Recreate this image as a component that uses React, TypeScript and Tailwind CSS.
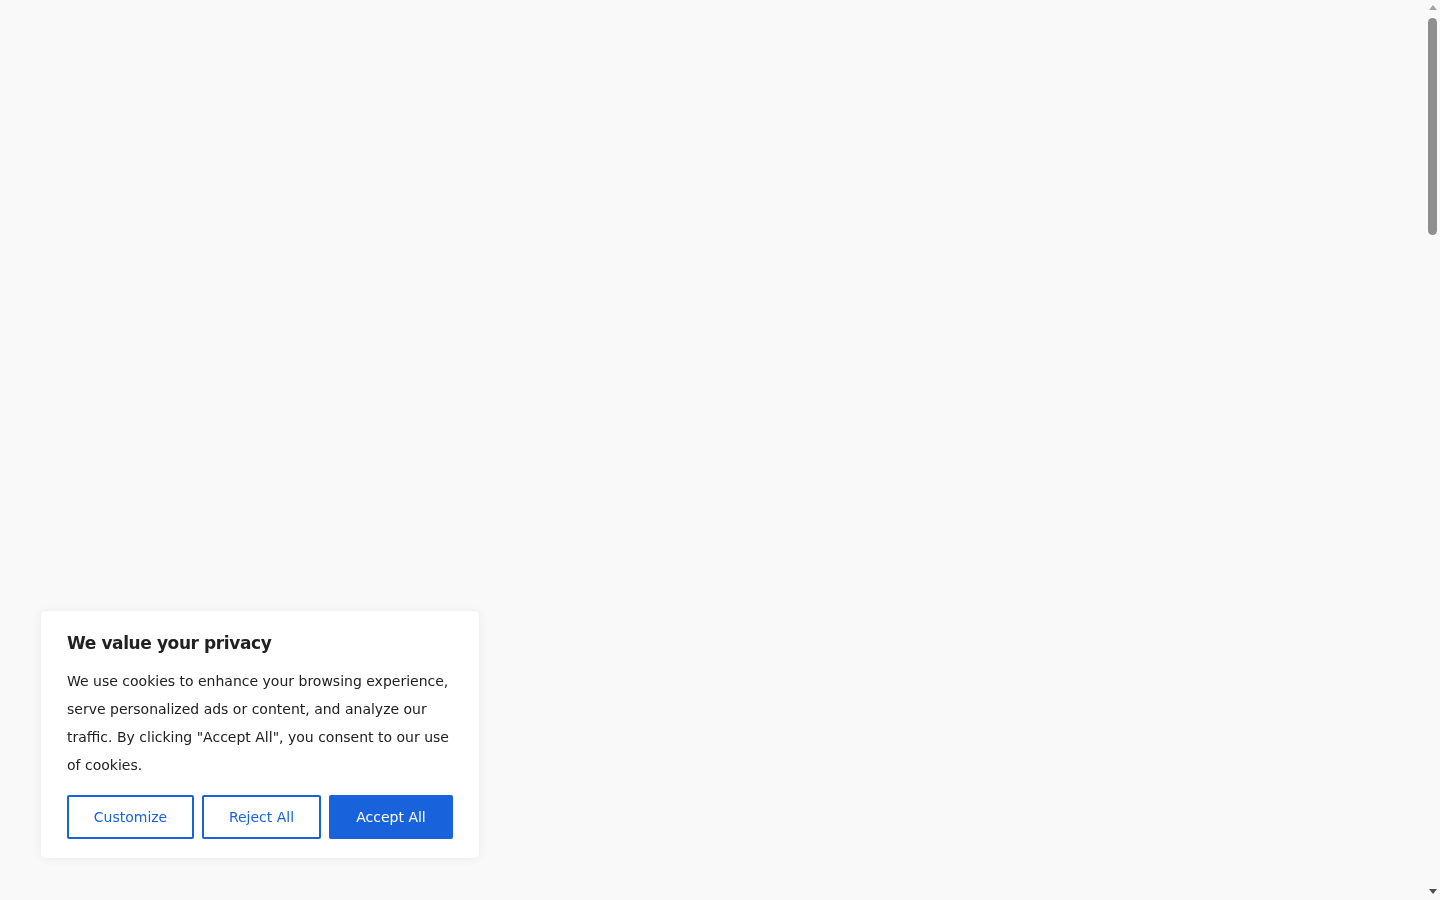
import * as React from "react";

function Scrollbar() {
  return (
    <div className="flex h-full w-[15px] shrink-0 flex-col items-center bg-[#f9f9f9]">
      <div className="mt-[5px] h-0 w-0 border-x-[4px] border-b-[5px] border-x-transparent border-b-[#a3a3a3]" />
      <div className="mt-[8px] h-[217px] w-[9px] rounded-full bg-[#8f8f8f]" />
      <div className="flex-1" />
      <div className="mb-[6px] h-0 w-0 border-x-[4px] border-t-[5px] border-x-transparent border-t-[#505050]" />
    </div>
  );
}

export default function App() {
  return (
    <div className="flex h-screen w-full overflow-hidden bg-[#f9f9f9]">
      <main className="relative flex-1">
        <div
          className="fixed bottom-[41px] left-[40px] z-50 w-[440px] rounded-[6px] border border-[#f2f2f2] bg-white px-[26px] pb-[19px] pt-[20px] shadow-[0_1px_10px_0_rgba(0,0,0,0.05)]"
          style={{ fontFamily: '"DejaVu Sans", "Liberation Sans", sans-serif' }}
        >
          <h2 className="text-[17px] font-bold leading-[24px] tracking-[-0.4px] text-[#212121]">
            We value your privacy
          </h2>
          <p className="mt-[12px] text-[14px] leading-[28px] text-[#212121]">
            We use cookies to enhance your browsing experience, serve personalized ads or content,
            and analyze our traffic. By clicking "Accept All", you consent to our use of cookies.
          </p>
          <div className="mt-[16px] flex gap-2">
            <button className="h-[44px] w-[127px] rounded-[2px] border-2 border-[#1863dc] bg-white text-[14px] text-[#1863dc]">
              Customize
            </button>
            <button className="h-[44px] w-[119px] rounded-[2px] border-2 border-[#1863dc] bg-white text-[14px] text-[#1863dc]">
              Reject All
            </button>
            <button className="h-[44px] w-[124px] rounded-[2px] border-2 border-[#1863dc] bg-[#1863dc] text-[14px] text-white">
              Accept All
            </button>
          </div>
        </div>
      </main>
      <Scrollbar />
    </div>
  );
}
